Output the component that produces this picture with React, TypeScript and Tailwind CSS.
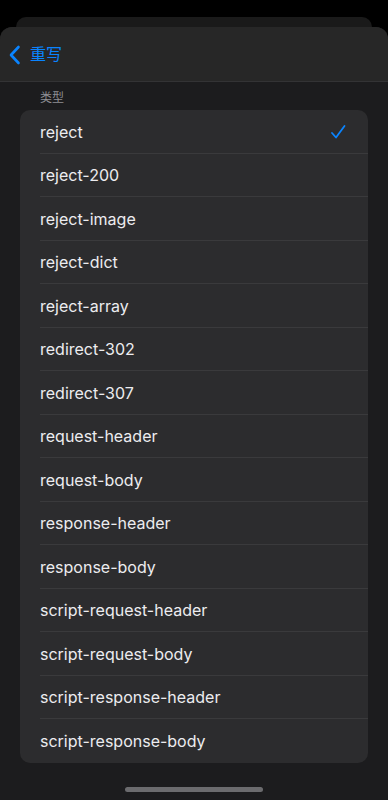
import React from 'react';

const items = [
  'reject',
  'reject-200',
  'reject-image',
  'reject-dict',
  'reject-array',
  'redirect-302',
  'redirect-307',
  'request-header',
  'request-body',
  'response-header',
  'response-body',
  'script-request-header',
  'script-request-body',
  'script-response-header',
  'script-response-body',
];

const font = { fontFamily: 'Inter, "Noto Sans CJK SC", sans-serif' };

const App = () => {
  return (
    <div className="w-[388px] h-[800px] bg-black overflow-hidden flex flex-col" style={font}>
      <div className="h-[17px] shrink-0" />
      <div className="mx-4 h-[10px] shrink-0 rounded-t-[10px] bg-[#1a1a1a]" />
      <div className="flex-1 flex flex-col rounded-t-[12px] overflow-hidden bg-[#1c1c1e]">
        {/* nav */}
        <div className="h-[55px] shrink-0 flex items-center bg-[#272727] border-b border-[#333335]">
          <svg width="14" height="20" viewBox="0 0 14 20" className="ml-[8px] mt-[1px]">
            <path d="M10.5 2 L3 10 L10.5 18" fill="none" stroke="#0a84ff" strokeWidth="2.6" strokeLinecap="round" strokeLinejoin="round" />
          </svg>
          <span className="ml-[8px] text-[16px] text-[#0a84ff]">重写</span>
        </div>

        <div className="pl-10 pt-[8px] pb-[4px] text-[12px] leading-[16px] text-[#8e8e93]">类型</div>

        <div className="mx-5 rounded-[10px] bg-[#2c2c2e] overflow-hidden">
          {items.map((t, i) => (
            <div key={t} className="flex h-[43.5px] items-stretch pl-5">
              <div
                className={
                  'flex-1 flex items-center justify-between pr-5 pt-[1px] ' +
                  (i < items.length - 1 ? 'border-b border-[#3a3a3c]' : '')
                }
              >
                <span className="text-[16px] text-[#ececf0]">{t}</span>
                {i === 0 && (
                  <svg width="16" height="16" viewBox="0 0 16 16" className="mr-[2px]">
                    <path d="M2 9 L6 13.5 L14.5 2" fill="none" stroke="#0a84ff" strokeWidth="1.8" strokeLinecap="round" strokeLinejoin="round" />
                  </svg>
                )}
              </div>
            </div>
          ))}
        </div>

        <div className="flex-1" />
        <div className="h-[13px] flex justify-center">
          <div className="w-[138px] h-[5px] rounded-full bg-[#6b6b6e]" />
        </div>
      </div>
    </div>
  );
};

export default App;
